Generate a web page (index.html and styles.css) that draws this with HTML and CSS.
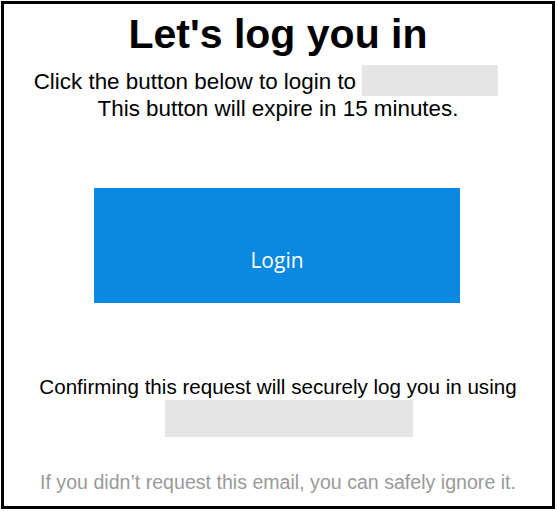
FILE: index.html
```html
<!DOCTYPE html>
<html lang="en">
<head>
<meta charset="utf-8">
<title>Let's log you in</title>
<link rel="stylesheet" href="styles.css">
</head>
<body>
<div class="card">
  <h1 class="title">Let's log you in</h1>
  <p class="intro">Click the button below to login to <span class="redact redact-inline"></span><br>This button will expire in 15 minutes.</p>
  <a class="login-btn" href="#">Login</a>
  <p class="confirm">Confirming this request will securely log you in using</p>
  <div class="redact redact-block"></div>
  <p class="footer">If you didn’t request this email, you can safely ignore it.</p>
</div>
</body>
</html>
```

FILE: styles.css
```css
html, body {
  margin: 0;
  padding: 0;
  background: #ffffff;
}

.card {
  box-sizing: border-box;
  width: 554px;
  height: 508px;
  margin: 1px 0 0 1px;
  border: 3px solid #000;
  padding-top: 7px;
  text-align: center;
  font-family: "Liberation Sans", Arial, sans-serif;
  color: #000;
}

.title {
  margin: 0;
  font-size: 41px;
  line-height: 46px;
  font-weight: bold;
}

.intro {
  margin: 12px 0 0;
  font-size: 22.4px;
  line-height: 26.5px;
}

.redact {
  background: #e5e5e5;
}

.redact-inline {
  display: inline-block;
  width: 136px;
  height: 31px;
  margin: -4px 24px -7px 0;
}

.login-btn {
  display: block;
  box-sizing: border-box;
  width: 366px;
  height: 115px;
  margin: 66px 0 0 90px;
  padding-top: 58px;
  background: #0b88e0;
  color: #fff;
  text-decoration: none;
  font-family: "Open Sans", "Noto Sans", sans-serif;
  font-size: 21px;
  line-height: 28px;
}

.confirm {
  margin: 72px 0 0;
  font-size: 20.6px;
  line-height: 24px;
}

.redact-block {
  width: 248px;
  height: 37px;
  margin: 1px 0 0 161px;
}

.footer {
  margin: 33px 0 0;
  font-size: 19.6px;
  line-height: 24px;
  color: #999;
}
```
